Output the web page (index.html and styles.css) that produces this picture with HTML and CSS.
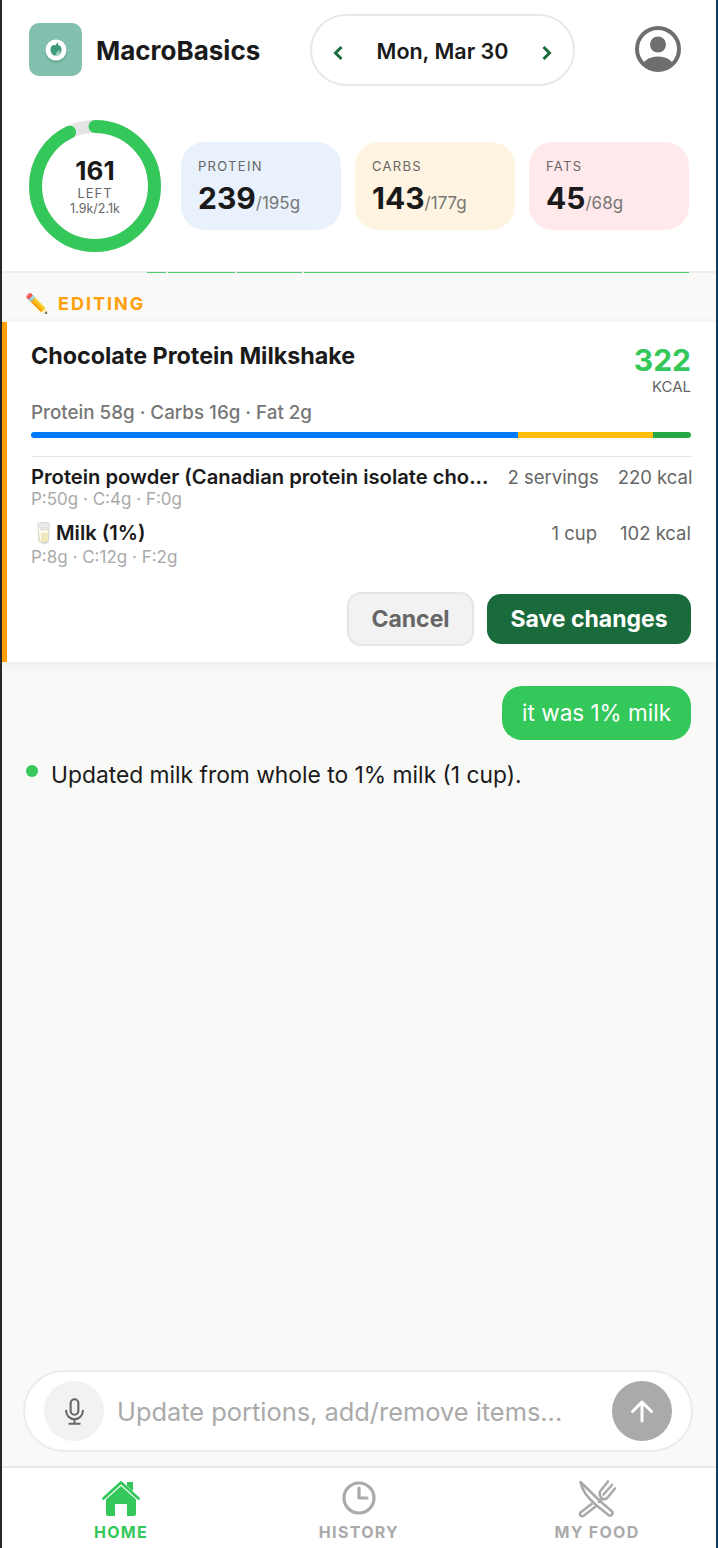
FILE: index.html
```html
<!DOCTYPE html>
<html lang="en">
<head>
    <meta charset="UTF-8">
    <meta name="viewport" content="width=device-width, initial-scale=1.0">
    <title>MacroBasics</title>
    <link rel="stylesheet" href="styles.css">
</head>
<body>
<div class="app">
    <header class="top-bar">
        <div class="brand">
            <div class="brand-logo">
                <svg width="28" height="28" viewBox="0 0 28 28">
                    <circle cx="14" cy="16" r="11" fill="#4f9c86" opacity="0.45"/>
                    <circle cx="14" cy="14" r="10.500" fill="#ffffff"/>
                    <path d="M14 9.500c-2.500-1.300-5.500.3-5.500 3.700 0 3.300 2.300 6.300 4.200 6.300.5 0 .9-.3 1.300-.3s.8.3 1.300.3c1.900 0 4.200-3 4.200-6.300 0-3.400-3-5-5.500-3.700z" fill="#3f9a7f"/>
                    <path d="M14 19c.2-2 1.500-3.800 3.500-5v5z" fill="#a9d8ca"/>
                    <path d="M14 9.500c0-1.300.7-2.400 2.300-2.800 0 1.600-.8 2.600-2.300 2.800z" fill="#1f7a5c"/>
                </svg>
            </div>
            <span class="brand-name">MacroBasics</span>
        </div>
        <div class="date-pill">
            <svg class="chevron" width="12" height="16" viewBox="0 0 12 16"><path d="M9.500 2 3.500 8l6 6" fill="none" stroke="#1a6b3c" stroke-width="3"/></svg>
            <span class="date-text">Mon, Mar 30</span>
            <svg class="chevron" width="12" height="16" viewBox="0 0 12 16"><path d="M2.500 2 8.500 8l-6 6" fill="none" stroke="#1a6b3c" stroke-width="3"/></svg>
        </div>
        <svg class="avatar" width="48" height="48" viewBox="0 0 48 48">
            <defs><clipPath id="avatarClip"><circle cx="24" cy="24" r="20"/></clipPath></defs>
            <circle cx="24" cy="24" r="21" fill="#fff" stroke="#6e6e6e" stroke-width="4"/>
            <circle cx="24" cy="19.500" r="8" fill="#6e6e6e"/>
            <ellipse cx="24" cy="44" rx="17" ry="12.500" fill="#6e6e6e" clip-path="url(#avatarClip)"/>
        </svg>
    </header>

    <section class="summary">
        <div class="ring">
            <svg width="132" height="132" viewBox="0 0 132 132">
                <circle cx="66" cy="66" r="59.500" fill="none" stroke="#e5e5e5" stroke-width="13"/>
                <circle cx="66" cy="66" r="59.500" fill="none" stroke="#34c759" stroke-width="13" stroke-linecap="round" stroke-dasharray="347 374" transform="rotate(-90 66 66)"/>
            </svg>
            <div class="ring-label">
                <div class="ring-num">161</div>
                <div class="ring-left">LEFT</div>
                <div class="ring-sub">1.9k/2.1k</div>
            </div>
        </div>
        <div class="macro-card macro-protein">
            <div class="macro-name">PROTEIN</div>
            <div class="macro-val"><b>239</b><span>/195g</span></div>
        </div>
        <div class="macro-card macro-carbs">
            <div class="macro-name">CARBS</div>
            <div class="macro-val"><b>143</b><span>/177g</span></div>
        </div>
        <div class="macro-card macro-fats">
            <div class="macro-name">FATS</div>
            <div class="macro-val"><b>45</b><span>/68g</span></div>
        </div>
        <div class="scroll-line">
            <i style="width: 19px"></i>
            <i style="width: 67px"></i>
            <i style="width: 65px"></i>
            <i style="width: 385px"></i>
        </div>
    </section>

    <main class="content">
        <div class="edit-tag"><span class="edit-icon">✏️</span><span>EDITING</span></div>
        <div class="meal-card">
            <div class="meal-head">
                <div class="meal-title">Chocolate Protein Milkshake</div>
                <div class="meal-kcal">
                    <div class="kcal-num">322</div>
                    <div class="kcal-unit">KCAL</div>
                </div>
            </div>
            <div class="meal-macros">Protein 58g · Carbs 16g · Fat 2g</div>
            <div class="macro-bar">
                <div class="bar-protein" style="width: 73.8%"></div>
                <div class="bar-carbs" style="width: 20.4%"></div>
                <div class="bar-fat" style="width: 5.8%"></div>
            </div>
            <div class="item item-first">
                <div class="item-row">
                    <span class="item-name">Protein powder (Canadian protein isolate cho...</span>
                    <span class="item-qty">2 servings</span>
                    <span class="item-kcal">220 kcal</span>
                </div>
                <div class="item-macros">P:50g · C:4g · F:0g</div>
            </div>
            <div class="item item-milk">
                <div class="item-row">
                    <span class="item-name">🥛Milk (1%)</span>
                    <span class="item-qty">1 cup</span>
                    <span class="item-kcal">102 kcal</span>
                </div>
                <div class="item-macros">P:8g · C:12g · F:2g</div>
            </div>
            <div class="meal-actions">
                <button class="btn-cancel">Cancel</button>
                <button class="btn-save">Save changes</button>
            </div>
        </div>

        <div class="chat">
            <div class="bubble">it was 1% milk</div>
            <div class="reply"><span class="reply-dot"></span><span>Updated milk from whole to 1% milk (1 cup).</span></div>
        </div>
    </main>

    <div class="composer-wrap">
        <div class="composer">
            <div class="mic-btn">
                <svg width="31" height="31" viewBox="0 0 24 24" fill="none" stroke="#666" stroke-width="1.600" stroke-linecap="round">
                    <rect x="9" y="2.500" width="6" height="12" rx="3"/>
                    <path d="M5.500 11.500a6.500 6.500 0 0 0 13 0M12 18v3.500M8 21.500h8"/>
                </svg>
            </div>
            <div class="composer-text">Update portions, add/remove items...</div>
            <div class="send-btn">
                <svg width="28" height="28" viewBox="0 0 28 28" fill="none" stroke="#fff" stroke-width="3" stroke-linecap="round" stroke-linejoin="round">
                    <path d="M14 24V5M4.500 14.500 14 5l9.500 9.500"/>
                </svg>
            </div>
        </div>
    </div>

    <nav class="tabs">
        <div class="tab tab-active">
            <svg width="40" height="38" viewBox="0 0 40 38">
                <path d="M2.500 19.500 20 3.500l17.500 16" fill="none" stroke="#34c759" stroke-width="2.800" stroke-linecap="round" stroke-linejoin="round"/>
                <path d="M26 3h6v9l-6-5z" fill="#34c759"/>
                <path d="M5 20.500 20 7l15 13.500V35a2 2 0 0 1-2 2h-7V25H14v12H7a2 2 0 0 1-2-2z" fill="#34c759"/>
            </svg>
            <span>HOME</span>
        </div>
        <div class="tab">
            <svg width="38" height="38" viewBox="0 0 38 38" fill="none" stroke="#aaa" stroke-width="3.200" stroke-linecap="round" stroke-linejoin="round">
                <circle cx="19" cy="19" r="15"/>
                <path d="M19 9v10h8"/>
            </svg>
            <span>HISTORY</span>
        </div>
        <div class="tab">
            <svg width="40" height="38" viewBox="0 0 40 38" fill="none" stroke="#aaa" stroke-width="2.600" stroke-linejoin="round" stroke-linecap="round">
                <path d="M3.500 3 23 22l12 10.500a2.500 2.500 0 0 1-3.500 3.500L19 26C12 20 5 12 3.500 3z"/>
                <path d="M14.500 25 3.500 33.500a2.300 2.300 0 0 0 3.500 3L18 28"/>
                <path d="M31 2.500 23 12.500c-1 3 .5 6.500 3 7.500 2 .5 4-.5 5-2l7-8.500M35 6l-8.500 9.500M22 23l3.500-3.500"/>
            </svg>
            <span>MY FOOD</span>
        </div>
    </nav>
</div>
</body>
</html>
```

FILE: styles.css
```css
* {
    box-sizing: border-box;
}
html, body {
    margin: 0;
    height: 100%;
}
body {
    background-color: #0f3a5c;
    font-family: Inter, "Noto Sans", sans-serif;
    color: #1a1a1a;
}
.app {
    height: 1548px;
    width: 716px;
    background-color: #f9f9f7;
    border-left: 2px solid #26262b;
    display: flex;
    flex-direction: column;
}

/* header */
.top-bar {
    height: 103px;
    background-color: #fff;
    display: flex;
    align-items: flex-start;
    padding: 14px 0 0 27px;
}
.brand {
    display: flex;
    align-items: center;
    gap: 14px;
    width: 281px;
    margin-top: 9px;
}
.brand-logo {
    width: 53px;
    height: 53px;
    border-radius: 10px;
    background-color: #82bfae;
    display: flex;
    align-items: center;
    justify-content: center;
}
.brand-name {
    font-size: 26px;
    font-weight: 700;
    padding-top: 2px;
}
.date-pill {
    width: 265px;
    height: 72px;
    border: 2px solid #e8e8e8;
    border-radius: 36px;
    display: flex;
    align-items: center;
    justify-content: space-between;
    padding: 0 20px;
}
.date-text {
    font-size: 21.500px;
    font-weight: 600;
    padding-top: 1px;
}
.chevron {
    margin-top: 6px;
}
.avatar {
    margin: 11px 0 0 59px;
}

/* ring + macro cards */
.summary {
    position: relative;
    height: 170px;
    background-color: #fff;
    display: flex;
    align-items: flex-start;
    padding: 17px 0 0 27px;
    border-bottom: 2px solid #ededeb;
}
.ring {
    position: relative;
    width: 132px;
    height: 132px;
    margin-right: 20px;
}
.ring-label {
    position: absolute;
    inset: 0;
    display: flex;
    flex-direction: column;
    align-items: center;
    padding-top: 37px;
}
.ring-num {
    font-size: 26px;
    font-weight: 700;
    line-height: 28px;
}
.ring-left {
    font-size: 13px;
    letter-spacing: 1px;
    color: #666;
    line-height: 16px;
}
.ring-sub {
    font-size: 12.500px;
    color: #666;
    line-height: 15px;
}
.macro-card {
    width: 160px;
    height: 88px;
    margin: 22px 14px 0 0;
    border-radius: 24px;
    padding: 15px 17px;
}
.macro-protein {
    background-color: #e9f1fd;
}
.macro-carbs {
    background-color: #fff4e1;
}
.macro-fats {
    background-color: #ffe9eb;
    margin-right: 0;
}
.macro-name {
    font-size: 13px;
    letter-spacing: 1.300px;
    color: #666;
    line-height: 18px;
}
.macro-val {
    margin-top: 5px;
    line-height: 36px;
}
.macro-val b {
    font-size: 30px;
    font-weight: 700;
}
.macro-val span {
    font-size: 17px;
    color: #777;
}
.scroll-line {
    position: absolute;
    left: 145px;
    bottom: -2px;
    display: flex;
    gap: 2px;
}
.scroll-line i {
    display: block;
    height: 1px;
    background-color: #4fcb72;
}

/* editing card */
.content {
    flex: 1;
    display: flex;
    flex-direction: column;
}
.edit-tag {
    height: 49px;
    display: flex;
    align-items: center;
    gap: 9px;
    padding: 12px 0 0 23px;
    font-size: 18px;
    font-weight: 700;
    letter-spacing: 2px;
    color: #ff9f0a;
}
.edit-icon {
    font-size: 19px;
    letter-spacing: 0;
}
.meal-card {
    height: 340px;
    background-color: #fff;
    border-left: 5px solid #ff9f0a;
    padding: 20px 25px 0 24px;
    box-shadow: 0 2px 10px rgba(0, 0, 0, 0.07);
}
.meal-head {
    display: flex;
    justify-content: space-between;
    align-items: flex-start;
    height: 59px;
}
.meal-title {
    font-size: 23.300px;
    font-weight: 700;
    line-height: 28px;
}
.kcal-num {
    font-size: 30px;
    font-weight: 700;
    color: #34c759;
    line-height: 36px;
    text-align: right;
}
.kcal-unit {
    font-size: 15px;
    color: #666;
    line-height: 17px;
    text-align: right;
}
.meal-macros {
    font-size: 18.800px;
    font-weight: 500;
    color: #777;
    line-height: 24px;
    margin-bottom: 7px;
}
.macro-bar {
    display: flex;
    height: 6px;
    border-radius: 3px;
    overflow: hidden;
}
.bar-protein {
    background-color: #007aff;
}
.bar-carbs {
    background-color: #ffbd0a;
}
.bar-fat {
    background-color: #28a745;
}
.item {
    margin-bottom: 10px;
}
.item-first {
    border-top: 1px solid #e5e5e5;
    margin-top: 18px;
    padding-top: 8px;
}
.item-milk .item-row {
    line-height: 28px;
}
.item-row {
    display: flex;
    align-items: center;
    gap: 19px;
    line-height: 24px;
    white-space: nowrap;
}
.item-name {
    flex: 1;
    font-size: 20.200px;
    font-weight: 600;
}
.item-qty, .item-kcal {
    font-size: 18.500px;
    color: #666;
}
.item-kcal {
    width: 75px;
    text-align: right;
}
.item-macros {
    font-size: 17px;
    color: #aaa;
    line-height: 20px;
}
.meal-actions {
    display: flex;
    justify-content: flex-end;
    align-items: center;
    gap: 13px;
    margin-top: 25px;
}
.meal-actions button {
    font-family: inherit;
    font-size: 23px;
    font-weight: 700;
    border-radius: 14px;
}
.btn-cancel {
    width: 127px;
    height: 54px;
    background-color: #f2f2f2;
    border: 2px solid #e5e5e5;
    color: #666;
}
.btn-save {
    width: 204px;
    height: 50px;
    background-color: #1a6b3c;
    border: none;
    color: #fff;
}

/* chat */
.chat {
    flex: 1;
    display: flex;
    flex-direction: column;
    padding: 24px 25px 0 24px;
}
.bubble {
    align-self: flex-end;
    background-color: #34c759;
    color: #fff;
    font-size: 22.500px;
    line-height: 54px;
    padding: 0 20px;
    border-radius: 20px;
}
.reply {
    display: flex;
    align-items: flex-start;
    gap: 13px;
    margin-top: 20px;
    font-size: 22.800px;
    line-height: 30px;
}
.reply-dot {
    width: 12px;
    height: 12px;
    border-radius: 50%;
    background-color: #34c759;
    margin-top: 5px;
}

/* composer */
.composer-wrap {
    height: 98px;
    padding: 0 23px 0 21px;
    border-bottom: 2px solid #e8e8e8;
}
.composer {
    height: 82px;
    background-color: #fff;
    border: 2px solid #ececec;
    border-radius: 41px;
    display: flex;
    align-items: center;
    padding: 0 19px;
}
.mic-btn {
    width: 60px;
    height: 60px;
    border-radius: 50%;
    background-color: #f2f2f2;
    display: flex;
    align-items: center;
    justify-content: center;
}
.composer-text {
    flex: 1;
    font-size: 25.400px;
    color: #aaa;
    margin-left: 13px;
    white-space: nowrap;
}
.send-btn {
    width: 60px;
    height: 60px;
    border-radius: 50%;
    background-color: #aaa;
    display: flex;
    align-items: center;
    justify-content: center;
}

/* bottom tabs */
.tabs {
    height: 80px;
    background-color: #fff;
    display: flex;
    justify-content: space-around;
}
.tab {
    width: 238px;
    display: flex;
    flex-direction: column;
    align-items: center;
    padding-top: 11px;
    font-size: 16px;
    line-height: 20px;
    font-weight: 700;
    letter-spacing: 1.300px;
    color: #aaa;
    gap: 5px;
}
.tab svg {
    overflow: visible;
}
.tab-active {
    color: #34c759;
}
```
